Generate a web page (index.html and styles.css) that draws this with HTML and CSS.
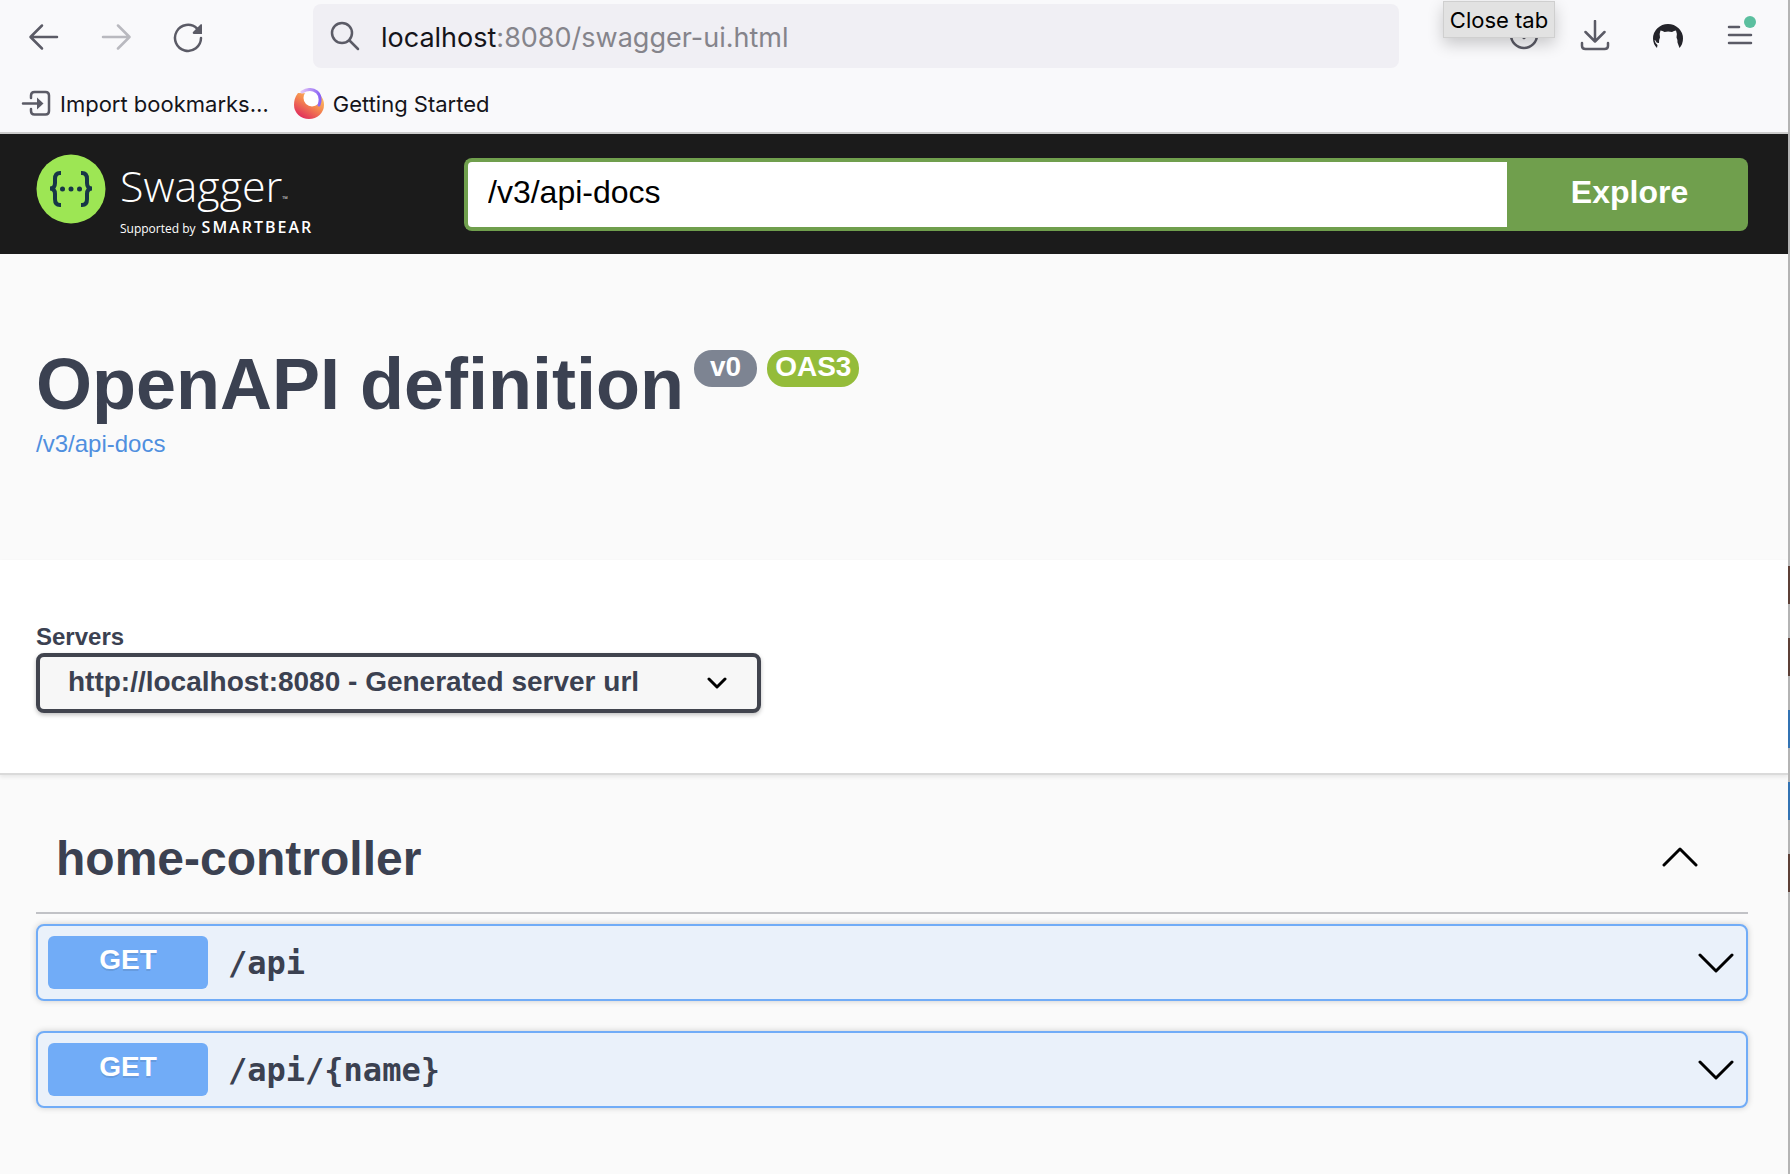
FILE: index.html
```html
<!DOCTYPE html>
<html lang="en">
<head>
<meta charset="utf-8">
<title>Swagger UI</title>
<link rel="stylesheet" href="styles.css">
</head>
<body>
<div class="desktop">
<div class="window">
  <header class="browser">
    <div class="toolbar">
      <nav class="nav" aria-label="Navigation">
        <button class="icon-btn" type="button" aria-label="Back"><svg width="32" height="32" viewBox="0 0 32 32"><path d="M29 16H3M14 4.500L2.500 16L14 27.500"/></svg></button>
        <button class="icon-btn dim" type="button" aria-label="Forward"><svg width="32" height="32" viewBox="0 0 32 32"><path d="M3 16H29M18 4.500L29.500 16L18 27.500"/></svg></button>
        <button class="icon-btn" type="button" aria-label="Reload"><svg width="32" height="32" viewBox="0 0 32 32"><path d="M25 7.500A13 13 0 1 0 29 17"/><path class="solid" d="M30 4V13H21.500Q20 12 21 11L28.500 3.500Q29.500 2.500 30 4Z"/></svg></button>
      </nav>
      <label class="urlbar">
        <svg class="search" width="32" height="32" viewBox="0 0 32 32" aria-hidden="true"><circle cx="13" cy="13" r="10"/><path d="M20.500 20.500L29 29"/></svg>
        <span class="url" role="textbox" aria-label="Address"><b>localhost</b>:8080/swagger-ui.html</span>
      </label>
      <div class="tools">
        <button class="icon-btn" type="button" aria-label="Save to Pocket"><svg width="32" height="32" viewBox="0 0 32 32"><path d="M3 5H29V15A13 13 0 0 1 3 15ZM10 12L16 18L22 12"/></svg></button>
        <button class="icon-btn" type="button" aria-label="Downloads"><svg width="32" height="32" viewBox="0 0 32 32"><path d="M15 1V21M5.500 12L15 21.500L24.500 12M2 23V26Q2 29 5.500 29H24.500Q28 29 28 26V23"/></svg></button>
        <button class="icon-btn" type="button" aria-label="GitHub"><svg width="32" height="32" viewBox="0 0 32 32"><path class="cat" d="M5 28Q1 24 1 18.500A15 14.500 0 0 1 31 18.500Q31 24 27.500 28L25.500 22.500Q26 20.500 24.500 17.500Q25.500 14 24 10.500Q22 10.500 20 12Q16 11 12.500 12Q10.500 10.500 8.500 10.500Q7 14 8 17.500Q6.500 20.500 7 23Q4.500 23.500 3.500 20.500L2.500 20Q3 23 5.500 25Z"/></svg></button>
        <button class="icon-btn menu" type="button" aria-label="Open application menu"><svg width="32" height="32" viewBox="0 0 32 32"><path d="M5 7H15M5 15H27M5 23H27"/></svg><i class="dot"></i></button>
        <div class="tooltip" role="tooltip">Close tab</div>
      </div>
    </div>
    <nav class="bookmarks" aria-label="Bookmarks">
      <a href="#"><svg width="32" height="32" viewBox="0 0 32 32"><path d="M11 10V7.500Q11 4 14.500 4H25.500Q29 4 29 7.500V23Q29 26.500 25.500 26.500H14.500Q11 26.500 11 23V21M3 15.500H20"/><path class="solid" d="M17 9.500L23.500 15.500L17 21.500Z"/></svg><span>Import bookmarks…</span></a>
      <a href="#"><svg class="fox" width="32" height="32" viewBox="0 0 32 32"><defs><linearGradient id="fire" x1="1" y1="0" x2="0.300" y2="1"><stop offset="0" stop-color="#ffd567"/><stop offset="0.500" stop-color="#f5894f"/><stop offset="1" stop-color="#e02c5c"/></linearGradient><linearGradient id="tail"><stop offset="0" stop-color="#e3c4f7"/><stop offset="1" stop-color="#8a63f5"/></linearGradient></defs><path fill="url(#fire)" d="M5 5Q1 10 1 17A15 14 0 0 0 31 17Q31 10 26 6Z"/><circle cx="19" cy="10" r="8.500" fill="#fff"/><path d="M9 4Q17 -1 24 4Q29 9 26 17" fill="none" stroke="url(#tail)" stroke-width="3"/></svg><span>Getting Started</span></a>
    </nav>
  </header>

  <div class="topbar">
    <a class="logo" href="#" aria-label="Swagger, supported by SmartBear">
      <svg width="70" height="70" viewBox="0 0 70 70" aria-hidden="true"><circle cx="35" cy="35" r="34.500" fill="#9de654"/><g fill="none" stroke="#173647" stroke-width="4"><path d="M25 19H24Q19 19 19 25V29Q19 34.500 14 34.500Q19 34.500 19 40V45Q19 51 24 51H25"/><path d="M45 19H46Q51 19 51 25V29Q51 34.500 56 34.500Q51 34.500 51 40V45Q51 51 46 51H45"/></g><g fill="#173647"><circle cx="26.500" cy="35" r="2.500"/><circle cx="35" cy="35" r="2.500"/><circle cx="43.500" cy="35" r="2.500"/></g></svg>
      <span class="wordmark"><span class="name">Swagger<small>™</small></span><span class="by">Supported by <b>SMARTBEAR</b></span></span>
    </a>
    <form class="explore">
      <input type="text" value="/v3/api-docs" aria-label="API definition URL">
      <button type="button">Explore</button>
    </form>
  </div>

  <main>
    <section class="info">
      <h1>OpenAPI definition<span class="badges"><span class="badge">v0</span><span class="badge oas">OAS3</span></span></h1>
      <a href="#">/v3/api-docs</a>
    </section>
    <section class="servers">
      <label for="server">Servers</label>
      <div class="select">
        <select id="server"><option>http://localhost:8080 - Generated server url</option></select>
        <svg width="20" height="12" viewBox="0 0 20 12" aria-hidden="true"><path d="M2 2L10 10L18 2"/></svg>
      </div>
    </section>
    <section class="operations">
      <h2><span>home-controller</span><button type="button" aria-label="Collapse section"><svg width="36" height="20" viewBox="0 0 36 20"><path d="M2 18L18 2L34 18"/></svg></button></h2>
      <div class="op"><span class="method">GET</span><span class="path">/api</span><button type="button" aria-label="Expand operation"><svg width="36" height="20" viewBox="0 0 36 20"><path d="M2 2L18 18L34 2"/></svg></button></div>
      <div class="op"><span class="method">GET</span><span class="path">/api/{name}</span><button type="button" aria-label="Expand operation"><svg width="36" height="20" viewBox="0 0 36 20"><path d="M2 2L18 18L34 2"/></svg></button></div>
    </section>
  </main>
</div>
<div class="behind"></div>
</div>
</body>
</html>
```
FILE: styles.css
```css
* { box-sizing: border-box; }
body { margin: 0; background: #fafafa; color: #3b4151; font-family: "Liberation Sans", Arial, sans-serif; }
button { border: 0; padding: 0; background: none; font: inherit; color: inherit; }
svg { display: block; flex: none; }
a { text-decoration: none; }
.desktop { display: flex; min-height: 100vh; }
.window { flex: 1; min-width: 0; }
.behind { width: 2px; background: linear-gradient(#b4b4b4 566px, #5d4037 566px 604px, #b4b4b4 604px 638px, #5d4037 638px 676px, #b4b4b4 676px 710px, #3373b3 710px 748px, #b4b4b4 748px 782px, #3373b3 782px 820px, #b4b4b4 820px 854px, #5d4037 854px 892px, #b4b4b4 892px); }

.browser { background: #f9f9fb; border-bottom: 2px solid #ccc; font-family: Inter, sans-serif; color: #15141a; }
.toolbar { display: flex; align-items: center; padding: 4px 32px 4px 28px; }
.nav { display: flex; gap: 40px; width: 285px; padding-top: 2px; }
.icon-btn { position: relative; color: #5b5b66; }
.icon-btn svg, .search, .bookmarks svg { fill: none; stroke: currentColor; stroke-width: 2.5; stroke-linecap: round; stroke-linejoin: round; }
.bookmarks .fox { stroke: none; }
.icon-btn .solid, .bookmarks .solid { fill: currentColor; stroke: none; }
.icon-btn .cat { fill: #24242a; stroke: none; }
.dim { opacity: 0.4; }
.urlbar { flex: 1; display: flex; align-items: center; gap: 20px; height: 64px; padding: 0 16px; border-radius: 8px; background: #f0eff4; color: #5b5b66; }
.url { padding-top: 2px; font-size: 27px; color: #85848b; }
.url b { font-weight: 400; color: #15141a; }
.tools { position: relative; display: flex; gap: 40px; margin-left: 109px; }
.dot { position: absolute; right: 0; top: -4px; width: 12px; height: 12px; border-radius: 50%; background: #5bbf9f; }
.tooltip { position: absolute; left: -65px; top: -19px; width: 112px; height: 37px; border: 1px solid #cfcfcf; background: #e2e2e2; color: #000; font-size: 22px; line-height: 36px; text-align: center; white-space: nowrap; box-shadow: 0 6px 16px rgba(0, 0, 0, 0.2); }
.bookmarks { display: flex; align-items: center; gap: 24px; height: 60px; padding: 4px 20px 0; }
.bookmarks a { display: flex; align-items: center; gap: 8px; color: #15141a; font-size: 22px; }
.bookmarks svg { color: #5b5b66; }

.topbar { display: flex; align-items: center; height: 120px; padding: 0 40px 0 36px; background: #1b1b1b; }
.logo { display: flex; gap: 14px; width: 428px; height: 80px; color: #fff; font-family: "Open Sans", sans-serif; }
.wordmark { display: flex; flex-direction: column; padding-top: 12px; }
.name { font-size: 43px; line-height: 40px; font-weight: 300; }
.name small { font-size: 8px; }
.by { display: flex; align-items: baseline; gap: 6px; font-size: 12px; line-height: 16px; }
.by b { font-size: 16px; letter-spacing: 2px; font-weight: 600; }
.explore { flex: 1; display: flex; height: 73px; }
.explore input { flex: 1; min-width: 0; border: 4px solid #709f4d; border-right: 0; border-radius: 8px 0 0 8px; padding: 0 20px 4px; background: #fff; color: #000; font: 32px "Liberation Sans", Arial, sans-serif; }
.explore button { width: 241px; padding: 0 0 4px 4px; border-radius: 0 8px 8px 0; background: #709f4d; color: #fff; font-size: 32px; font-weight: 700; }

.info { padding: 88px 36px 98px; }
.info h1 { display: flex; margin: 0; font-size: 72px; line-height: 84px; }
.badges { display: flex; gap: 10px; margin: 8px 0 0 10px; }
.badge { height: 37px; padding: 0 16px; border-radius: 18px; background: #7d8492; color: #fff; font-size: 28px; line-height: 34px; }
.oas { padding: 0 8px; background: #94bc3a; }
.info a { display: block; color: #4f8fdf; font-size: 24px; line-height: 36px; }
.servers { padding: 61px 36px 60px; background: #fff; border-bottom: 2px solid #dadada; box-shadow: 0 2px 4px rgba(0, 0, 0, 0.08); }
.servers label { display: block; font-size: 24px; line-height: 32px; font-weight: 700; }
.select { display: flex; align-items: center; width: 725px; height: 60px; border: 4px solid #41444e; border-radius: 8px; background: #f7f7f7; box-shadow: 0 2px 4px rgba(0, 0, 0, 0.25); padding-right: 30px; }
.select select { flex: 1; height: 100%; appearance: none; border: 0; padding: 0 0 3px 28px; background: none; color: #3b4151; font: 700 28px "Liberation Sans", Arial, sans-serif; }
.select svg, .operations svg { fill: none; stroke: #000; stroke-width: 3; stroke-linecap: round; stroke-linejoin: round; }
.operations { padding: 32px 40px 64px 36px; }
.operations h2 { display: flex; align-items: center; justify-content: space-between; height: 107px; margin: 0 0 10px; padding: 0 50px 2px 20px; border-bottom: 2px solid #c1c2c6; font-size: 48px; }
.operations h2 button { padding-bottom: 4px; }
.op { display: flex; align-items: center; height: 77px; margin-bottom: 30px; padding: 0 12px 0 10px; border: 2px solid #71acf7; border-radius: 8px; background: #eaf1fa; box-shadow: 0 0 6px rgba(0, 0, 0, 0.19); }
.method { width: 160px; height: 53px; border-radius: 6px; background: #71acf7; color: #fff; font-size: 28px; line-height: 48px; font-weight: 700; text-align: center; text-shadow: 0 2px 0 rgba(0, 0, 0, 0.1); }
.path { flex: 1; padding-left: 20px; font: 700 32px "DejaVu Sans Mono", monospace; }
```
